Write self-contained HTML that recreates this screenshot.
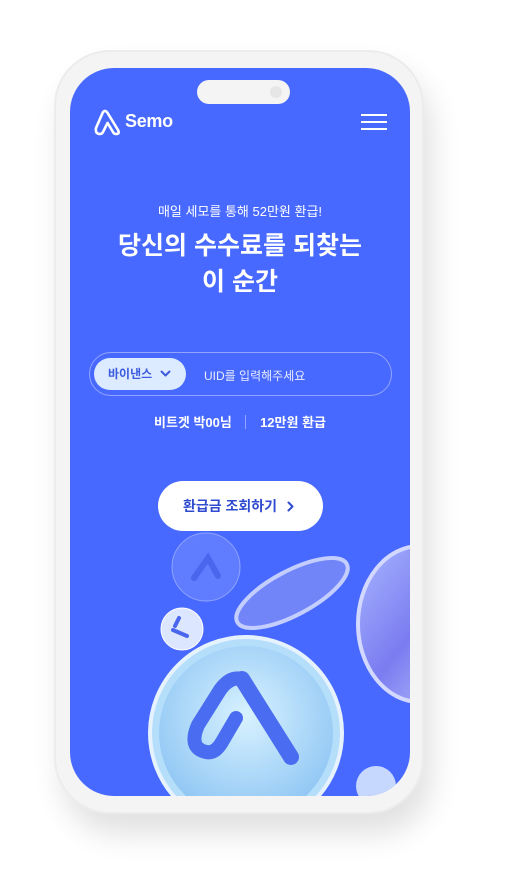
<!DOCTYPE html>
<html><head><meta charset="utf-8"><style>
*{margin:0;padding:0;box-sizing:border-box}
body{width:529px;height:896px;background:#fff;position:relative;overflow:hidden;font-family:"Liberation Sans","Noto Sans CJK KR",sans-serif}
.frame{position:absolute;left:54px;top:50px;width:370px;height:764px;border-radius:56px;background:#f4f4f4;box-shadow:8px 20px 30px rgba(0,0,0,.12),inset 0 0 0 2px #ececec}
.screen{position:absolute;left:70px;top:68px;width:340px;height:728px;border-radius:44px;background:#4869ff;overflow:hidden;color:#fff}
.island{position:absolute;left:127px;top:12px;width:93px;height:24px;border-radius:12px;background:#f4f4f4}
.island i{position:absolute;right:8px;top:6px;width:12px;height:12px;border-radius:50%;background:#e6e6e6}
.t{position:absolute;width:100%;text-align:center}
</style></head><body>
<div class="frame"></div>
<div class="screen">
<div class="island"><i></i></div>
<svg style="position:absolute;left:23px;top:40px" width="30" height="28" viewBox="0 0 30 28"><path d="M14 4 L25 22 Q27 26 23 26 Q21 26 20 24 L14 14 M14 4 Q12 2 10 4 L3 20 Q2 26 7 26 Q9 26 10 24 L14 16" fill="none" stroke="#fff" stroke-width="2.6" stroke-linejoin="round"/></svg>
<div style="position:absolute;left:55px;top:43px;font-size:18px;font-weight:bold;letter-spacing:-.3px">Semo</div>
<div style="position:absolute;left:291px;top:46px;width:26px;height:2px;background:#fff;box-shadow:0 7px 0 #fff,0 14px 0 #fff"></div>
<div class="t" style="top:133px;font-size:13px">매일 세모를 통해 52만원 환급!</div>
<div class="t" style="top:160px;font-size:25px;font-weight:bold;line-height:36px">당신의 수수료를 되찾는<br>이 순간</div>
<div style="position:absolute;left:19px;top:284px;width:303px;height:44px;border-radius:22px;border:1px solid rgba(255,255,255,.4)"></div>
<div style="position:absolute;left:24px;top:290px;width:92px;height:32px;border-radius:16px;background:#dcebff;color:#3d5be0;font-size:12px;font-weight:bold;line-height:32px;padding-left:14px">바이낸스<svg style="position:absolute;left:66px;top:12px" width="11" height="8" viewBox="0 0 11 8"><path d="M1.5 1.5 L5.5 5.5 L9.5 1.5" fill="none" stroke="#3d5be0" stroke-width="2" stroke-linecap="round" stroke-linejoin="round"/></svg></div>
<div style="position:absolute;left:134px;top:299px;font-size:12px;color:#e8ecff">UID를 입력해주세요</div>
<div class="t" style="top:344px;font-size:13px;font-weight:bold;">비트겟 박00님 <span style="display:inline-block;width:1px;height:14px;background:rgba(255,255,255,.4);margin:0 10px;vertical-align:-2px"></span> 12만원 환급</div>
<div style="position:absolute;left:88px;top:413px;width:165px;height:50px;border-radius:25px;background:#fff;color:#2f4bd0;font-size:14px;font-weight:bold;line-height:50px;padding-left:25px">환급금 조회하기<svg style="position:absolute;left:129px;top:20px" width="8" height="11" viewBox="0 0 8 11"><path d="M1.5 1.5 L5.5 5.5 L1.5 9.5" fill="none" stroke="#2f4bd0" stroke-width="2" stroke-linecap="round" stroke-linejoin="round"/></svg></div>
<svg style="position:absolute;left:0;top:450px" width="340" height="278" viewBox="0 450 340 278">
<defs><radialGradient id="g" cx=".5" cy=".4" r=".6"><stop offset="0" stop-color="#d8f2ff"/><stop offset="1" stop-color="#8fc6f4"/></radialGradient>
<linearGradient id="p" x1="0" y1="0" x2="1" y2="1"><stop offset="0" stop-color="#a8b6ff"/><stop offset=".5" stop-color="#7a7cf0"/><stop offset="1" stop-color="#c8d0ff"/></linearGradient></defs>
<circle cx="136" cy="499" r="34" fill="#7890ff" fill-opacity=".5" stroke="#b6c4ff" stroke-opacity=".6"/>
<path d="M124 510 L138 490 L148 508" fill="none" stroke="#4a66ec" stroke-width="6" stroke-linecap="round"/>
<circle cx="112" cy="561" r="21" fill="#dde6ff" stroke="#fff"/>
<path d="M103 562 L117 568 M105 558 L109 550" fill="none" stroke="#4a66ec" stroke-width="4" stroke-linecap="round"/>
<ellipse cx="222" cy="525" rx="62" ry="22" transform="rotate(-28 222 525)" fill="#7d8cf6" stroke="#c3ceff" stroke-width="4" fill-opacity=".8"/>
<ellipse cx="350" cy="556" rx="62" ry="78" fill="url(#p)" stroke="#d2d8ff" stroke-width="4"/>
<circle cx="176" cy="665" r="96" fill="#b5defa" stroke="#e6f3ff" stroke-width="4"/>
<circle cx="176" cy="665" r="87" fill="url(#g)"/>
<path d="M145 612 L172 605" stroke="none"/>
<path d="M172 611 L221 689" fill="none" stroke="#4a6cf0" stroke-width="16" stroke-linecap="round"/>
<path d="M172 611 Q160 608 150 622 L128 657 Q118 680 136 684 Q145 686 152 674 L166 650" fill="none" stroke="#4a6cf0" stroke-width="14" stroke-linecap="round" stroke-linejoin="round"/>
<circle cx="306" cy="718" r="20" fill="#c7d8ff"/>
</svg>
</div>
</body></html>
